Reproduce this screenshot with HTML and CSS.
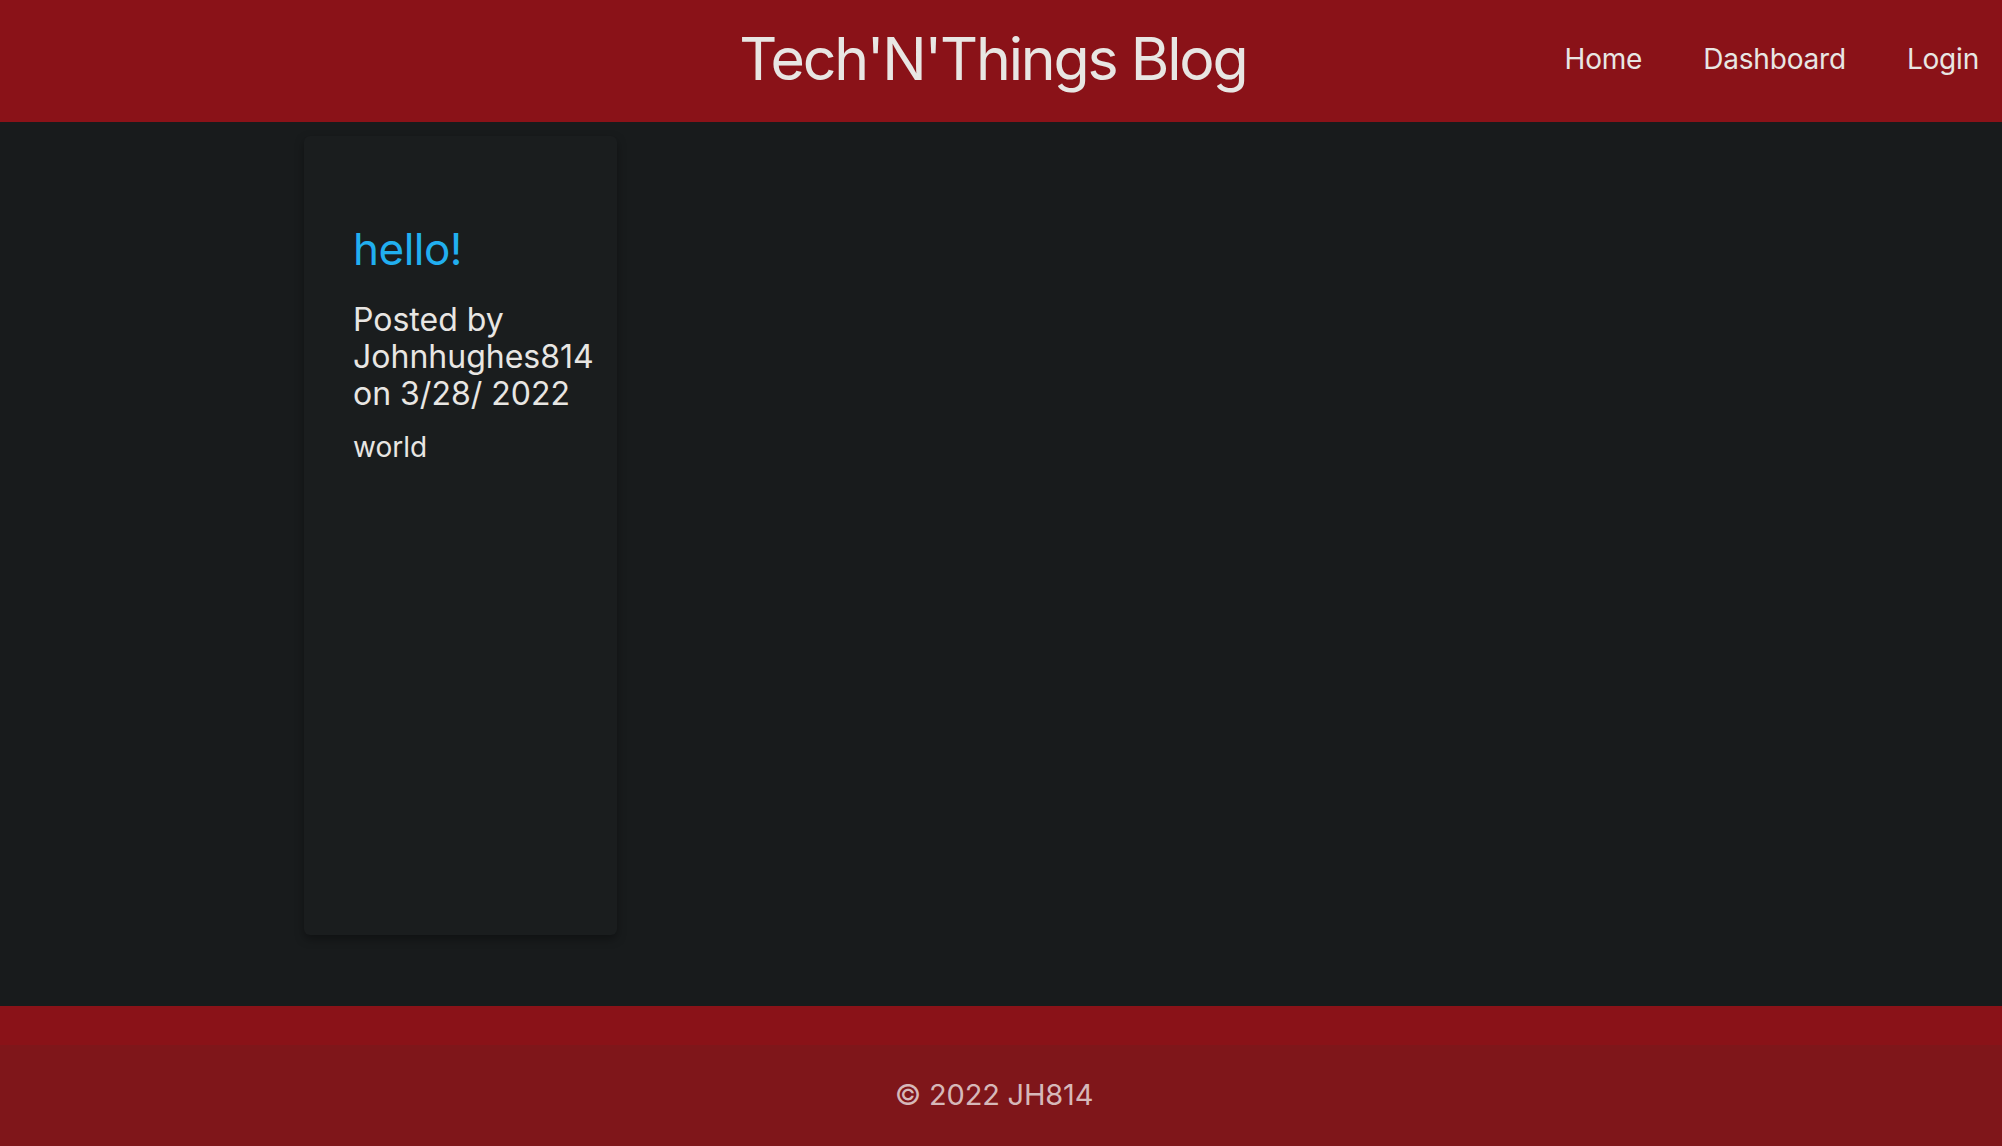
FILE: index.html
```html
<!DOCTYPE html>
<html lang="en">
<head>
<meta charset="utf-8">
<title>Tech'N'Things Blog</title>
<link rel="stylesheet" href="styles.css">
</head>
<body>
<header class="site-header">
  <h1 class="site-title">Tech'N'Things Blog</h1>
  <nav class="site-nav">
    <a href="#" class="nav-link">Home</a>
    <a href="#" class="nav-link">Dashboard</a>
    <a href="#" class="nav-link">Login</a>
  </nav>
</header>
<main class="content">
  <article class="post-card">
    <h2 class="post-title">hello!</h2>
    <p class="post-meta">Posted by Johnhughes814 on 3/28/ 2022</p>
    <p class="post-body">world</p>
  </article>
</main>
<footer class="site-footer">
  <div class="footer-band"></div>
  <p class="footer-text">© 2022 JH814</p>
</footer>
</body>
</html>
```

FILE: styles.css
```css
html, body {
  margin: 0;
  padding: 0;
}
body {
  background: #181b1c;
  color: #e8e6e3;
  font-family: Inter, "Noto Sans", "Liberation Sans", sans-serif;
  min-height: 100vh;
  display: flex;
  flex-direction: column;
}
.site-header {
  background: #8a1218;
  height: 122px;
  display: flex;
  align-items: flex-start;
}
.site-title {
  flex: 1;
  margin: 0;
  padding-left: 421px;
  padding-top: 23px;
  text-align: center;
  font-weight: 400;
  font-size: 59px;
  line-height: 72px;
  color: #e8e6e3;
  letter-spacing: -2.2px;
}
.site-nav {
  display: flex;
  gap: 61px;
  padding-right: 23px;
  padding-top: 39px;
}
.nav-link {
  color: #e8e6e3;
  text-decoration: none;
  font-size: 28px;
  line-height: 40px;
  letter-spacing: -0.2px;
}
.content {
  flex: 1;
  padding: 14px 0 69px 304px;
  display: flex;
  align-items: flex-start;
}
.post-card {
  width: 264px;
  min-height: 780px;
  padding: 19px 0 0 49px;
  background: #1a1d1e;
  border-radius: 6px;
  box-shadow: 0 4px 10px rgba(0, 0, 0, 0.35);
}
.post-title {
  margin: 0;
  padding-top: 67px;
  font-weight: 400;
  font-size: 44px;
  line-height: 54px;
  color: #21aff0;
  letter-spacing: -0.5px;
}
.post-meta {
  margin: 25px 0 0;
  font-size: 32px;
  line-height: 37px;
  color: #e8e6e3;
}
.post-body {
  margin: 17px 0 0;
  font-size: 28px;
  line-height: 36px;
  color: #e8e6e3;
}
.site-footer {
  background: #7f161a;
  height: 140px;
  display: flex;
  flex-direction: column;
}
.footer-band {
  height: 39px;
  background: #8a1218;
}
.footer-text {
  margin: 0;
  padding-top: 30px;
  padding-right: 14px;
  text-align: center;
  font-size: 29px;
  line-height: 40px;
  letter-spacing: -0.2px;
  color: #d6b8b9;
}
```
